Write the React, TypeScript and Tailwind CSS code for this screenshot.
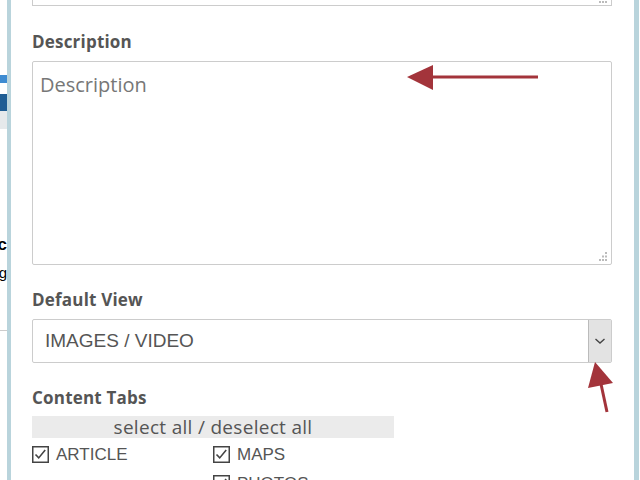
import React from 'react';

const Grip = () => (
  <svg className="absolute right-[3px] bottom-[3px]" width="9" height="9" viewBox="0 0 9 9" fill="#bbb">
    <rect x="6" y="0" width="2" height="2" />
    <rect x="3" y="3.5" width="2" height="2" />
    <rect x="6" y="3.5" width="2" height="2" />
    <rect x="0" y="7" width="2" height="2" />
    <rect x="3" y="7" width="2" height="2" />
    <rect x="6" y="7" width="2" height="2" />
  </svg>
);

const CheckBox = ({ label }: { label: string }) => (
  <div className="flex items-center gap-[7px] h-[18px]">
    <svg width="17" height="17" viewBox="0 0 17 17" fill="none" stroke="#444">
      <rect x="0.75" y="0.75" width="15.5" height="15.5" strokeWidth="1.5" />
      <path d="M3.5 8.5l3.2 3.4L13.2 4" strokeWidth="1.6" />
    </svg>
    <span className="text-[17px] text-[#555] leading-none">{label}</span>
  </div>
);

const Label = ({ children }: { children: React.ReactNode }) => (
  <div className="shrink-0 text-[17px] tracking-[0.2px] font-bold text-[#555] leading-[20px] font-['Open_Sans',sans-serif]">
    {children}
  </div>
);

export default function App() {
  return (
    <div className="relative w-[640px] h-[480px] overflow-hidden bg-white flex font-['Liberation_Sans',Arial,sans-serif]">
      {/* page behind the modal */}
      <div className="w-[7px] shrink-0 flex flex-col overflow-hidden">
        <div className="h-[75px] shrink-0" />
        <div className="h-[8px] shrink-0 bg-[#3d8bd1]" />
        <div className="h-[11px] shrink-0" />
        <div className="h-[17px] shrink-0 bg-[#1e5d94]" />
        <div className="h-[18px] shrink-0 bg-[#e6e9eb]" />
        <div className="h-[101px] shrink-0" />
        <div className="h-[30px] shrink-0 flex justify-end">
          <span className="text-[17px] font-bold text-black leading-[30px] whitespace-nowrap">Loc</span>
        </div>
        <div className="h-[26px] shrink-0 flex justify-end">
          <span className="text-[15px] text-black underline leading-[26px] whitespace-nowrap">ng</span>
        </div>
        <div className="h-[44px] shrink-0" />
        <div className="h-px shrink-0 bg-[#ccc]" />
      </div>

      {/* modal */}
      <div className="w-[632px] shrink-0 border-l-[4px] border-r-[5px] border-l-[#b9d4dc] border-r-[#b9d4dc] bg-white pl-[21px] pr-[22px] flex flex-col">
        <div className="relative shrink-0 h-[6px] border border-t-0 border-[#ccc]">
          <svg className="absolute right-[3px] bottom-[1px]" width="9" height="3" viewBox="0 0 9 3" fill="#bbb">
            <rect x="0" y="0" width="2" height="2" />
            <rect x="3" y="0" width="2" height="2" />
            <rect x="6" y="0" width="2" height="2" />
          </svg>
        </div>

        <div className="mt-[26px] shrink-0">
          <Label>Description</Label>
        </div>
        <div className="relative shrink-0 mt-[9px] h-[204px] border border-[#ccc] rounded-[2px] px-[7px] pt-[11px]">
          <span className="text-[20px] text-[#777] font-['Open_Sans',sans-serif] leading-[24px]">Description</span>
          <Grip />
        </div>

        <div className="mt-[25px] shrink-0">
          <Label>Default View</Label>
        </div>
        <div className="shrink-0 mt-[9px] h-[44px] flex border border-[#ccc] rounded-[2px]">
          <div className="flex-1 flex items-center pl-[12px] text-[19px] text-[#555]">IMAGES / VIDEO</div>
          <div className="w-[23px] flex items-center justify-center bg-[#e3e3e3] border-l border-[#bbb]">
            <svg width="12" height="8" viewBox="0 0 12 8" fill="none" stroke="#444" strokeWidth="1.4">
              <path d="M1.5 2l4.5 4 4.5-4" />
            </svg>
          </div>
        </div>

        <div className="mt-[25px] shrink-0">
          <Label>Content Tabs</Label>
        </div>
        <div className="shrink-0 mt-[8px] w-[362px] h-[22px] bg-[#ebebeb] flex items-center justify-center text-[19px] tracking-[0.3px] text-[#555] font-['Open_Sans',sans-serif] leading-none">
          select all / deselect all
        </div>
        <div className="shrink-0 mt-[7px] grid grid-cols-[181px_1fr] gap-y-[11px]">
          <CheckBox label="ARTICLE" />
          <CheckBox label="MAPS" />
          <div />
          <CheckBox label="PHOTOS" />
        </div>
      </div>

      <div className="flex-1 bg-white" />

      {/* annotation arrows */}
      <svg className="absolute left-0 top-0 pointer-events-none" width="640" height="480" viewBox="0 0 640 480">
        <line x1="432" y1="77" x2="538" y2="77" stroke="#a3343b" strokeWidth="3" />
        <polygon points="407,77 433,65 433,90" fill="#a3343b" />
        <line x1="601" y1="384" x2="607" y2="412" stroke="#a3343b" strokeWidth="3" />
        <polygon points="595,362 588,388 613,383" fill="#a3343b" />
      </svg>
    </div>
  );
}
